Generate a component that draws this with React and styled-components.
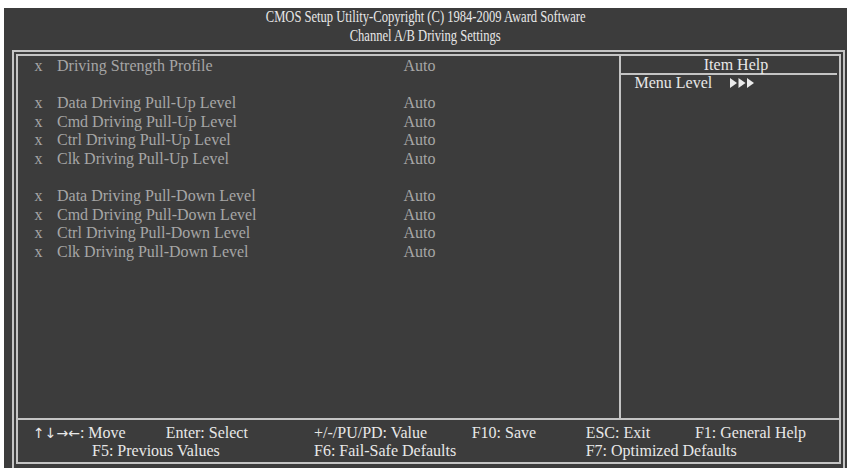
import React from "react";
import styled, { createGlobalStyle } from "styled-components";

const Global = createGlobalStyle`
  html, body { margin: 0; padding: 0; background: #ffffff; }
  * { box-sizing: border-box; }
`;

const LINE = "#c4c4c4";

const Panel = styled.div`
  margin: 8px 0 0 4px;
  width: 843px;
  height: 460px;
  background: #3c3c3c;
  overflow: hidden;
  display: flex;
  flex-direction: column;
  font-family: "Liberation Serif", "Times New Roman", serif;
  font-size: 16px;
`;

const Title = styled.div`
  height: 42px;
  flex: none;
  display: flex;
  flex-direction: column;
  align-items: center;
  color: #e8e8e8;
  line-height: 18.8px;
`;

const TitleLine = styled.div`
  white-space: nowrap;
  transform: scaleX(0.785);
`;

const OuterFrame = styled.div`
  margin-left: 8px;
  width: 833px;
  flex: 1;
  border: 2px solid ${LINE};
  border-bottom: none;
  padding: 2px 2px 0 2px;
`;

const InnerFrame = styled.div`
  height: 410px;
  border: 2px solid ${LINE};
  display: flex;
  flex-direction: column;
`;

const Main = styled.div`
  height: 362px;
  flex: none;
  display: flex;
`;

const ItemColumn = styled.div`
  width: 603px;
  border-right: 2px solid ${LINE};
  padding-top: 1px;
`;

const Row = styled.div`
  display: grid;
  grid-template-columns: 22.5px 346.5px 1fr;
  padding-left: 16.5px;
  height: 18.6px;
  line-height: 18.6px;
  color: ${(p) => (p.$disabled ? "#a6a6a6" : "#e8e8e8")};
  white-space: nowrap;
`;

const HelpColumn = styled.div`
  flex: 1;
  display: flex;
  flex-direction: column;
`;

const HelpHeader = styled.div`
  height: 19px;
  margin-right: 2px;
  border-bottom: 2px solid ${LINE};
  padding-left: 14px;
  text-align: center;
  line-height: 17px;
  color: #e8e8e8;
`;

const HelpLine = styled.div`
  display: flex;
  align-items: center;
  padding-left: 13.5px;
  height: 16px;
  color: #e8e8e8;
  white-space: nowrap;
`;

const Arrows = styled.svg`
  margin-left: 18px;
  display: block;
`;

const Footer = styled.div`
  flex: 1;
  border-top: 2px solid ${LINE};
  padding: 4px 0 0 15px;
  display: grid;
  grid-template-columns: 59px 73.7px 148.3px 157.7px 114px 109.3px 1fr;
  grid-auto-rows: 18px;
  line-height: 18px;
  color: #e8e8e8;
  white-space: nowrap;
`;

const Key = styled.div`
  grid-column: ${(p) => p.$col} / span ${(p) => p.$span || 1};
  grid-row: ${(p) => p.$row};
`;

const ArrowGlyphs = styled.span`
  font-family: "DejaVu Sans", sans-serif;
  font-size: 14px;
`;

const items = [
  ["Driving Strength Profile", "Auto"],
  null,
  ["Data Driving Pull-Up Level", "Auto"],
  ["Cmd Driving Pull-Up Level", "Auto"],
  ["Ctrl Driving Pull-Up Level", "Auto"],
  ["Clk Driving Pull-Up Level", "Auto"],
  null,
  ["Data Driving Pull-Down Level", "Auto"],
  ["Cmd Driving Pull-Down Level", "Auto"],
  ["Ctrl Driving Pull-Down Level", "Auto"],
  ["Clk Driving Pull-Down Level", "Auto"],
];

export default function App() {
  return (
    <>
      <Global />
      <Panel>
        <Title>
          <TitleLine>CMOS Setup Utility-Copyright (C) 1984-2009 Award Software</TitleLine>
          <TitleLine>Channel A/B Driving Settings</TitleLine>
        </Title>
        <OuterFrame>
          <InnerFrame>
            <Main>
              <ItemColumn>
                {items.map((it, i) =>
                  it ? (
                    <Row key={i} $disabled>
                      <span>x</span>
                      <span>{it[0]}</span>
                      <span>{it[1]}</span>
                    </Row>
                  ) : (
                    <Row key={i} />
                  )
                )}
              </ItemColumn>
              <HelpColumn>
                <HelpHeader>Item Help</HelpHeader>
                <HelpLine>
                  Menu Level
                  <Arrows width="24" height="10" viewBox="0 0 24 10">
                    <polygon points="0,0 7,5 0,10" fill="#ececec" />
                    <polygon points="8.5,0 15.5,5 8.5,10" fill="#ececec" />
                    <polygon points="17,0 24,5 17,10" fill="#ececec" />
                  </Arrows>
                </HelpLine>
              </HelpColumn>
            </Main>
            <Footer>
              <Key $col={1} $row={1} $span={2}>
                <ArrowGlyphs>↑↓→←</ArrowGlyphs>: Move
              </Key>
              <Key $col={3} $row={1}>Enter: Select</Key>
              <Key $col={4} $row={1}>+/-/PU/PD: Value</Key>
              <Key $col={5} $row={1}>F10: Save</Key>
              <Key $col={6} $row={1}>ESC: Exit</Key>
              <Key $col={7} $row={1}>F1: General Help</Key>
              <Key $col={2} $row={2} $span={2}>F5: Previous Values</Key>
              <Key $col={4} $row={2}>F6: Fail-Safe Defaults</Key>
              <Key $col={6} $row={2} $span={2}>F7: Optimized Defaults</Key>
            </Footer>
          </InnerFrame>
        </OuterFrame>
      </Panel>
    </>
  );
}
